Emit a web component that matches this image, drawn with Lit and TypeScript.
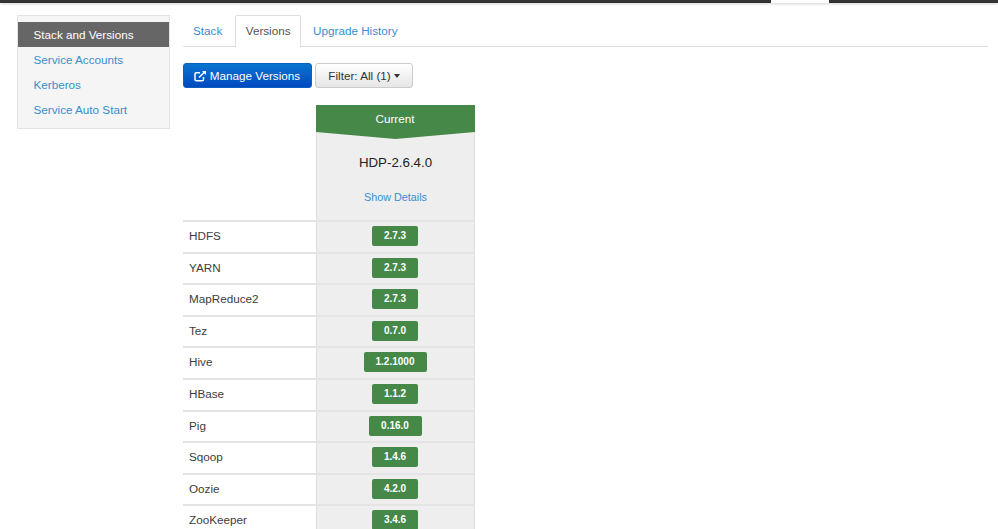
import { LitElement, html, css } from "lit";
import { customElement } from "lit/decorators.js";

const services: [string, string][] = [
  ["HDFS", "2.7.3"], ["YARN", "2.7.3"], ["MapReduce2", "2.7.3"], ["Tez", "0.7.0"],
  ["Hive", "1.2.1000"], ["HBase", "1.1.2"], ["Pig", "0.16.0"], ["Sqoop", "1.4.6"],
  ["Oozie", "4.2.0"], ["ZooKeeper", "3.4.6"],
];

@customElement("app-root")
export class AppRoot extends LitElement {
  static styles = css`
    :host { display: block; height: 529px; overflow: hidden; background: #fff; font-family: "Liberation Sans", Arial, sans-serif; font-size: 11.7px; color: #3d3d3d; }
    a { color: #3a8dd0; text-decoration: none; }
    .top { display: flex; height: 3px; box-shadow: 0 1px 3px rgba(0,0,0,.18); }
    .top .d { background: #333; }
    .top .l { width: 771px; }
    .top .gap { width: 58px; background: #fff; }
    .top .r { flex: 1; }
    .main { display: flex; align-items: flex-start; padding: 12px 10px 0 16.5px; gap: 13px; }
    .side { width: 153.5px; box-sizing: border-box; height: 114px; background: #f5f5f5; border: 1px solid #e3e3e3; padding-top: 6px; flex: none; }
    .side div { height: 25px; line-height: 26px; padding-left: 16px; box-sizing: border-box; }
    .side .on { background: #666; color: #fff; }
    .content { flex: 1; min-width: 0; }
    .tabs { display: flex; height: 31px; border-bottom: 1px solid #ddd; box-sizing: content-box; }
    .tab { padding: 0 10px; line-height: 32px; height: 31px; box-sizing: border-box; margin-right: 3px; }
    .tab.on { color: #555; background: #fff; border: 1px solid #ddd; border-bottom: 0; height: 32px; padding: 0 9.5px; line-height: 30px; margin-right: 2px; border-radius: 2px 2px 0 0; }
    .btns { display: flex; gap: 3px; margin-top: 16px; }
    .btn { height: 25px; box-sizing: border-box; border-radius: 3px; display: flex; align-items: center; justify-content: center; }
    .primary { width: 129px; color: #fff; background: linear-gradient(#0a75d0, #0049c0); border: 1px solid #0a5fc0; gap: 3px; padding-right: 1px; }
    .default { width: 98px; color: #333; background: linear-gradient(#fff, #e6e6e6); border: 1px solid #ccc; gap: 3px; }
    .caret { width: 0; height: 0; border-left: 3.5px solid transparent; border-right: 3.5px solid transparent; border-top: 4px solid #333; }
    .grid { display: grid; grid-template-columns: 133px 159px; margin-top: 17px; }
    .blank { height: 115px; }
    .hd { height: 115px; background: #eee; border-left: 1px solid #ddd; border-right: 1px solid #ddd; box-sizing: border-box; text-align: center; position: relative; }
    .banner { position: absolute; left: -1px; right: -1px; top: 0; height: 34px; }
    .banner svg { display: block; width: 100%; height: 34px; }
    .cur { position: absolute; left: 0; right: 0; top: 0; line-height: 28px; color: #fff; padding-right: 1px; }
    .hdp { padding-top: 49px; font-size: 13.3px; color: #222; line-height: 18px; }
    .det { display: block; margin-top: 18px; font-size: 10.8px; line-height: 14px; }
    .name, .val { height: 31.6px; box-sizing: border-box; border-top: 2px solid #e4e4e4; }
    .name { padding-left: 6px; line-height: 28px; }
    .val { background: #eee; border-left: 1px solid #ddd; border-right: 1px solid #ddd; display: flex; justify-content: center; padding: 4px 1px 0 0; }
    .badge { height: 20px; min-width: 46px; padding: 0 4px; box-sizing: border-box; background: #468847; color: #fff; font-size: 10px; font-weight: bold; line-height: 19px; text-align: center; border-radius: 2px; }
    .badge.wide { min-width: 63px; }
    .badge.mid { min-width: 53px; }
  `;

  render() {
    return html`
      <div class="top"><div class="d l"></div><div class="gap"></div><div class="d r"></div></div>
      <div class="main">
        <div class="side">
          <div class="on">Stack and Versions</div>
          <div><a>Service Accounts</a></div>
          <div><a>Kerberos</a></div>
          <div><a>Service Auto Start</a></div>
        </div>
        <div class="content">
          <div class="tabs">
            <a class="tab">Stack</a>
            <a class="tab on">Versions</a>
            <a class="tab">Upgrade History</a>
          </div>
          <div class="btns">
            <div class="btn primary">
              <svg width="13" height="12" viewBox="0 0 13 12" fill="none" stroke="#fff" stroke-width="1.5">
                <path d="M9.5 7v2.5a1.2 1.2 0 0 1-1.2 1.2H2.2A1.2 1.2 0 0 1 1 9.5V4a1.2 1.2 0 0 1 1.2-1.2H6" />
                <path d="M5 7.5 11 1.5" />
                <path d="M8 .9h4v4z" fill="#fff" stroke="none" />
              </svg>
              <span>Manage Versions</span>
            </div>
            <div class="btn default"><span>Filter: All (1)</span><span class="caret"></span></div>
          </div>
          <div class="grid">
            <div class="blank"></div>
            <div class="hd">
              <div class="banner">
                <svg viewBox="0 0 159 34" preserveAspectRatio="none"><path d="M0 0H159V27L79.5 34 0 27z" fill="#468847" /></svg>
                <div class="cur">Current</div>
              </div>
              <div class="hdp">HDP-2.6.4.0</div>
              <a class="det">Show Details</a>
            </div>
            ${services.map(([n, v]) => html`
              <div class="name">${n}</div>
              <div class="val"><span class="badge ${v.length > 6 ? "wide" : v.length > 5 ? "mid" : ""}">${v}</span></div>
            `)}
          </div>
        </div>
      </div>
    `;
  }
}
